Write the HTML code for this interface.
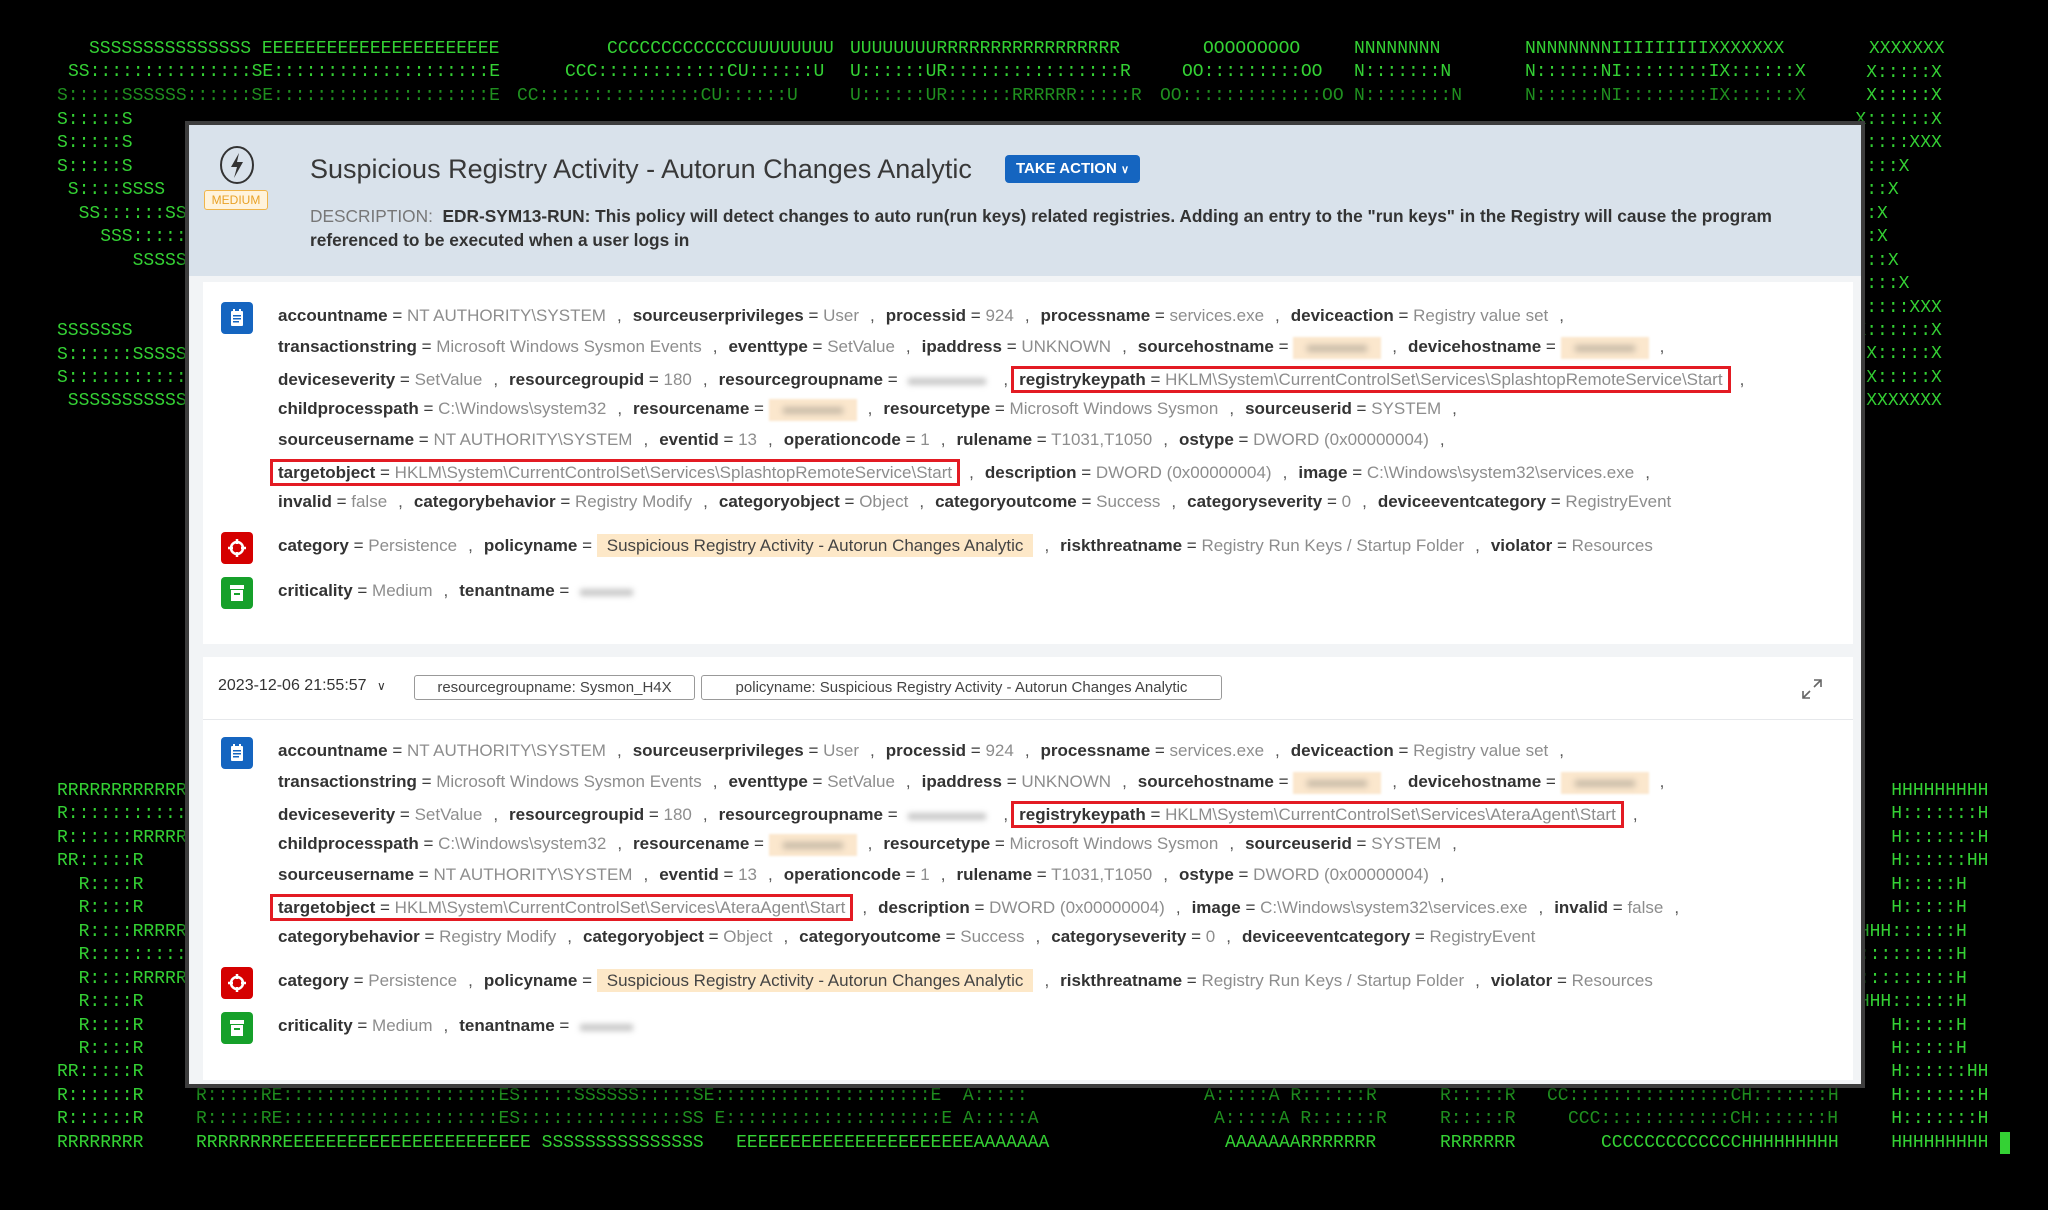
<!DOCTYPE html>
<html><head><meta charset="utf-8">
<style>
html,body{margin:0;padding:0;background:#000;width:2048px;height:1210px;overflow:hidden;position:relative;font-family:"Liberation Sans",sans-serif}
.a{position:absolute;font:18px/23.45px "Liberation Mono",monospace;color:#34d134;white-space:pre;margin:0}
.d{color:#1f8f1f}
#panel{position:absolute;left:185px;top:121px;width:1672px;height:959px;border:4px solid #3d3d3d;background:#f2f4f6;box-shadow:0 0 6px #000}
#hdr{position:absolute;left:0;top:0;width:1672px;height:151px;background:#d9e2eb}
.card{position:absolute;left:14px;width:1650px;background:#fff}
.row{position:absolute;left:75px;white-space:nowrap;font-size:17px;line-height:24px;height:24px;color:#3a3a3a}
k{color:#333;font-weight:bold}
v{color:#8d8d8d}
c{color:#555;margin:0 11px}
.bx{display:inline-block;border:3px solid #e31b23;padding:0 5px;line-height:21px;margin:0 -2px 0 -8px}
.bl{display:inline-block;width:88px;height:22px;vertical-align:middle;background:#fbe7cd;filter:blur(1px);position:relative}
.bl:after{content:"";position:absolute;left:14px;right:14px;top:8px;height:7px;background:#c9bba8;filter:blur(3px)}
.bg{display:inline-block;width:90px;height:22px;vertical-align:middle;position:relative}
.bg:after{content:"";position:absolute;left:6px;right:6px;top:8px;height:7px;background:#c8c8c8;filter:blur(3px)}
.pn{background:#fde8c8;padding:2px 10px;color:#444}
.ic{position:absolute;left:18px;width:32px;height:32px;border-radius:4px}
</style></head><body>

<!-- top ascii -->
<div class="a" style="left:89px;top:38px">SSSSSSSSSSSSSSS EEEEEEEEEEEEEEEEEEEEEE</div>
<div class="a" style="left:607px;top:38px">CCCCCCCCCCCCCUUUUUUUU</div>
<div class="a" style="left:850px;top:38px">UUUUUUUURRRRRRRRRRRRRRRRR</div>
<div class="a" style="left:1203px;top:38px">OOOOOOOOO</div>
<div class="a" style="left:1354px;top:38px">NNNNNNNN</div>
<div class="a" style="left:1525px;top:38px">NNNNNNNNIIIIIIIIIXXXXXXX</div>
<div class="a" style="left:1869px;top:38px">XXXXXXX</div>

<div class="a" style="left:68px;top:61px">SS:::::::::::::::SE::::::::::::::::::::E</div>
<div class="a" style="left:565px;top:61px">CCC::::::::::::CU::::::U</div>
<div class="a" style="left:850px;top:61px">U::::::UR::::::::::::::::R</div>
<div class="a" style="left:1182px;top:61px">OO:::::::::OO</div>
<div class="a" style="left:1354px;top:61px">N:::::::N</div>
<div class="a" style="left:1525px;top:61px">N::::::NI::::::::IX::::::X</div>

<div class="a d" style="left:57px;top:85px">S:::::SSSSSS::::::SE::::::::::::::::::::E</div>
<div class="a d" style="left:517px;top:85px">CC:::::::::::::::CU::::::U</div>
<div class="a d" style="left:850px;top:85px">U::::::UR::::::RRRRRR:::::R</div>
<div class="a d" style="left:1160px;top:85px">OO:::::::::::::OO</div>
<div class="a d" style="left:1354px;top:85px">N::::::::N</div>
<div class="a d" style="left:1525px;top:85px">N::::::NI::::::::IX::::::X</div>

<div class="a" style="left:57px;top:109px">S:::::S
S:::::S
S:::::S
 S::::SSSS
  SS::::::SSSSS
    SSS::::::::SS
       SSSSSS::::S
            S:::::S
            S:::::S
SSSSSSS     S:::::S
S::::::SSSSSS:::::S
S:::::::::::::::SS
 SSSSSSSSSSSSSSS</div>
<div class="a" style="left:1715px;top:62px">              X:::::X
              X:::::X
             X::::::X
XXX:::::X   X:::::XXX
   X:::::X X:::::X
    X:::::X:::::X
     X:::::::::X
     X:::::::::X
    X:::::X:::::X
   X:::::X X:::::X
XXX:::::X   X:::::XXX
X::::::X     X::::::X
X:::::X       X:::::X
X:::::X       X:::::X
XXXXXXX       XXXXXXX</div>

<!-- bottom ascii -->
<div class="a" style="left:57px;top:780px">RRRRRRRRRRRRRRRRR
R::::::::::::::::R
R::::::RRRRRR:::::R
RR:::::R     R:::::R
  R::::R     R:::::R
  R::::R     R:::::R
  R::::RRRRRR:::::R
  R:::::::::::::RR
  R::::RRRRRR:::::R
  R::::R     R:::::R
  R::::R     R:::::R
  R::::R     R:::::R
RR:::::R     R:::::R
R::::::R
R::::::R
RRRRRRRR</div>
<div class="a" style="left:1740px;top:780px">HHHHHHHHH     HHHHHHHHH
H:::::::H     H:::::::H
H:::::::H     H:::::::H
HH::::::H     H::::::HH
  H:::::H     H:::::H
  H:::::H     H:::::H
  H::::::HHHHH::::::H
  H:::::::::::::::::H
  H:::::::::::::::::H
  H::::::HHHHH::::::H
  H:::::H     H:::::H
  H:::::H     H:::::H
HH::::::H     H::::::HH
              H:::::::H
              H:::::::H
              HHHHHHHHH</div>
<div class="a d" style="left:196px;top:1085px">R:::::RE::::::::::::::::::::ES:::::SSSSSS:::::SE::::::::::::::::::::E  A:::::</div>
<div class="a d" style="left:1204px;top:1085px">A:::::A R::::::R</div>
<div class="a d" style="left:1440px;top:1085px">R:::::R</div>
<div class="a d" style="left:1547px;top:1085px">CC:::::::::::::::CH:::::::H</div>
<div class="a d" style="left:196px;top:1108px">R:::::RE::::::::::::::::::::ES:::::::::::::::SS E::::::::::::::::::::E A:::::A</div>
<div class="a d" style="left:1214px;top:1108px">A:::::A R::::::R</div>
<div class="a d" style="left:1440px;top:1108px">R:::::R</div>
<div class="a d" style="left:1568px;top:1108px">CCC::::::::::::CH:::::::H</div>
<div class="a" style="left:196px;top:1132px">RRRRRRRREEEEEEEEEEEEEEEEEEEEEEE SSSSSSSSSSSSSSS   EEEEEEEEEEEEEEEEEEEEEEAAAAAAA</div>
<div class="a" style="left:1225px;top:1132px">AAAAAAARRRRRRR</div>
<div class="a" style="left:1440px;top:1132px">RRRRRRR</div>
<div class="a" style="left:1601px;top:1132px">CCCCCCCCCCCCCHHHHHHHHH</div>
<div style="position:absolute;left:2000px;top:1132px;width:10px;height:22px;background:#34d134"></div>

<div id="panel">
 <div id="hdr">
  <svg style="position:absolute;left:29px;top:20px" width="38" height="40" viewBox="0 0 38 40"><ellipse cx="19" cy="20" rx="16" ry="18" fill="none" stroke="#333" stroke-width="2"/><path d="M21 8 L13 22 H19 L16 33 L25 17 H19 Z" fill="#333"/></svg>
  <div style="position:absolute;left:15px;top:65px;width:62px;height:18px;border:1.5px solid #f0b54a;background:#fff3dc;border-radius:3px;color:#e9a227;font-size:12px;line-height:18px;text-align:center">MEDIUM</div>
  <div style="position:absolute;left:121px;top:29px;font-size:27px;color:#383838;white-space:nowrap">Suspicious Registry Activity - Autorun Changes Analytic</div>
  <div style="position:absolute;left:816px;top:30px;width:135px;height:28px;background:#1565c0;border-radius:4px;color:#fff;font-size:15px;font-weight:bold;line-height:28px;text-align:center">TAKE ACTION <span style="font-size:11px">&#8744;</span></div>
  <div style="position:absolute;left:121px;top:79px;width:1540px;font-size:17.3px;line-height:24px;color:#333;font-weight:bold;white-space:nowrap"><span style="color:#777;font-weight:normal">DESCRIPTION:</span>&nbsp; EDR-SYM13-RUN: This policy will detect changes to auto run(run keys) related registries. Adding an entry to the "run keys" in the Registry will cause the program<br>referenced to be executed when a user logs in</div>
 </div>

 <div class="card" style="top:157px;height:362px">
  <div class="ic" style="top:20px;background:#1565c0"><svg width="32" height="32"><rect x="10" y="9" width="12" height="15" rx="1" fill="#fff"/><rect x="12" y="13" width="8" height="1.5" fill="#1565c0"/><rect x="12" y="16" width="8" height="1.5" fill="#1565c0"/><rect x="12" y="19" width="6" height="1.5" fill="#1565c0"/><rect x="12" y="7" width="2" height="4" fill="#fff"/><rect x="18" y="7" width="2" height="4" fill="#fff"/></svg></div>
  <div class="row" style="top:22px"><k>accountname</k> = <v>NT AUTHORITY\SYSTEM</v><c>,</c><k>sourceuserprivileges</k> = <v>User</v><c>,</c><k>processid</k> = <v>924</v><c>,</c><k>processname</k> = <v>services.exe</v><c>,</c><k>deviceaction</k> = <v>Registry value set</v><c>,</c></div>
  <div class="row" style="top:53px"><k>transactionstring</k> = <v>Microsoft Windows Sysmon Events</v><c>,</c><k>eventtype</k> = <v>SetValue</v><c>,</c><k>ipaddress</k> = <v>UNKNOWN</v><c>,</c><k>sourcehostname</k> = <span class="bl"></span><c>,</c><k>devicehostname</k> = <span class="bl"></span><c>,</c></div>
  <div class="row" style="top:84px"><k>deviceseverity</k> = <v>SetValue</v><c>,</c><k>resourcegroupid</k> = <v>180</v><c>,</c><k>resourcegroupname</k> = <span class="bg"></span><c>,</c><span class="bx"><k>registrykeypath</k> = <v>HKLM\System\CurrentControlSet\Services\SplashtopRemoteService\Start</v></span><c>,</c></div>
  <div class="row" style="top:115px"><k>childprocesspath</k> = <v>C:\Windows\system32</v><c>,</c><k>resourcename</k> = <span class="bl"></span><c>,</c><k>resourcetype</k> = <v>Microsoft Windows Sysmon</v><c>,</c><k>sourceuserid</k> = <v>SYSTEM</v><c>,</c></div>
  <div class="row" style="top:146px"><k>sourceusername</k> = <v>NT AUTHORITY\SYSTEM</v><c>,</c><k>eventid</k> = <v>13</v><c>,</c><k>operationcode</k> = <v>1</v><c>,</c><k>rulename</k> = <v>T1031,T1050</v><c>,</c><k>ostype</k> = <v>DWORD (0x00000004)</v><c>,</c></div>
  <div class="row" style="top:177px"><span class="bx"><k>targetobject</k> = <v>HKLM\System\CurrentControlSet\Services\SplashtopRemoteService\Start</v></span><c>,</c><k>description</k> = <v>DWORD (0x00000004)</v><c>,</c><k>image</k> = <v>C:\Windows\system32\services.exe</v><c>,</c></div>
  <div class="row" style="top:208px"><k>invalid</k> = <v>false</v><c>,</c><k>categorybehavior</k> = <v>Registry Modify</v><c>,</c><k>categoryobject</k> = <v>Object</v><c>,</c><k>categoryoutcome</k> = <v>Success</v><c>,</c><k>categoryseverity</k> = <v>0</v><c>,</c><k>deviceeventcategory</k> = <v>RegistryEvent</v></div>
  <div class="ic" style="top:250px;background:#d50000"><svg width="32" height="32"><circle cx="16" cy="16" r="6" fill="none" stroke="#fff" stroke-width="2.5"/><path d="M16 7v5M16 20v5M7 16h5M20 16h5" stroke="#fff" stroke-width="2.5"/></svg></div>
  <div class="row" style="top:252px"><k>category</k> = <v>Persistence</v><c>,</c><k>policyname</k> = <span class="pn">Suspicious Registry Activity - Autorun Changes Analytic</span><c>,</c><k>riskthreatname</k> = <v>Registry Run Keys / Startup Folder</v><c>,</c><k>violator</k> = <v>Resources</v></div>
  <div class="ic" style="top:295px;background:#16a02a"><svg width="32" height="32"><rect x="9" y="8" width="14" height="4" fill="#fff"/><rect x="10" y="13" width="12" height="11" fill="#fff"/><rect x="13" y="16" width="6" height="2" fill="#16a02a"/></svg></div>
  <div class="row" style="top:297px"><k>criticality</k> = <v>Medium</v><c>,</c><k>tenantname</k> = <span class="bg" style="width:65px"></span></div>
 </div>

 <div class="card" style="top:532px;height:423px">
  <div style="position:absolute;left:0;top:62px;width:1650px;height:1px;background:#e6e8eb"></div>
  <div style="position:absolute;left:15px;top:20px;font-size:16px;color:#333;white-space:nowrap">2023-12-06 21:55:57 <span style="font-size:12px;margin-left:6px">&#8744;</span></div>
  <div style="position:absolute;left:211px;top:18px;width:279px;height:23px;border:1px solid #999;border-radius:3px;font-size:15px;line-height:23px;text-align:center;color:#444;white-space:nowrap">resourcegroupname: Sysmon_H4X</div>
  <div style="position:absolute;left:498px;top:18px;width:519px;height:23px;border:1px solid #999;border-radius:3px;font-size:15px;line-height:23px;text-align:center;color:#444;white-space:nowrap">policyname: Suspicious Registry Activity - Autorun Changes Analytic</div>
  <svg style="position:absolute;left:1597px;top:20px" width="24" height="24"><path d="M14 3h7v7M21 3l-7 7M10 21H3v-7M3 21l7-7" stroke="#666" stroke-width="1.6" fill="none"/></svg>
  <div class="ic" style="top:80px;background:#1565c0"><svg width="32" height="32"><rect x="10" y="9" width="12" height="15" rx="1" fill="#fff"/><rect x="12" y="13" width="8" height="1.5" fill="#1565c0"/><rect x="12" y="16" width="8" height="1.5" fill="#1565c0"/><rect x="12" y="19" width="6" height="1.5" fill="#1565c0"/><rect x="12" y="7" width="2" height="4" fill="#fff"/><rect x="18" y="7" width="2" height="4" fill="#fff"/></svg></div>
  <div class="row" style="top:82px"><k>accountname</k> = <v>NT AUTHORITY\SYSTEM</v><c>,</c><k>sourceuserprivileges</k> = <v>User</v><c>,</c><k>processid</k> = <v>924</v><c>,</c><k>processname</k> = <v>services.exe</v><c>,</c><k>deviceaction</k> = <v>Registry value set</v><c>,</c></div>
  <div class="row" style="top:113px"><k>transactionstring</k> = <v>Microsoft Windows Sysmon Events</v><c>,</c><k>eventtype</k> = <v>SetValue</v><c>,</c><k>ipaddress</k> = <v>UNKNOWN</v><c>,</c><k>sourcehostname</k> = <span class="bl"></span><c>,</c><k>devicehostname</k> = <span class="bl"></span><c>,</c></div>
  <div class="row" style="top:144px"><k>deviceseverity</k> = <v>SetValue</v><c>,</c><k>resourcegroupid</k> = <v>180</v><c>,</c><k>resourcegroupname</k> = <span class="bg"></span><c>,</c><span class="bx"><k>registrykeypath</k> = <v>HKLM\System\CurrentControlSet\Services\AteraAgent\Start</v></span><c>,</c></div>
  <div class="row" style="top:175px"><k>childprocesspath</k> = <v>C:\Windows\system32</v><c>,</c><k>resourcename</k> = <span class="bl"></span><c>,</c><k>resourcetype</k> = <v>Microsoft Windows Sysmon</v><c>,</c><k>sourceuserid</k> = <v>SYSTEM</v><c>,</c></div>
  <div class="row" style="top:206px"><k>sourceusername</k> = <v>NT AUTHORITY\SYSTEM</v><c>,</c><k>eventid</k> = <v>13</v><c>,</c><k>operationcode</k> = <v>1</v><c>,</c><k>rulename</k> = <v>T1031,T1050</v><c>,</c><k>ostype</k> = <v>DWORD (0x00000004)</v><c>,</c></div>
  <div class="row" style="top:237px"><span class="bx"><k>targetobject</k> = <v>HKLM\System\CurrentControlSet\Services\AteraAgent\Start</v></span><c>,</c><k>description</k> = <v>DWORD (0x00000004)</v><c>,</c><k>image</k> = <v>C:\Windows\system32\services.exe</v><c>,</c><k>invalid</k> = <v>false</v><c>,</c></div>
  <div class="row" style="top:268px"><k>categorybehavior</k> = <v>Registry Modify</v><c>,</c><k>categoryobject</k> = <v>Object</v><c>,</c><k>categoryoutcome</k> = <v>Success</v><c>,</c><k>categoryseverity</k> = <v>0</v><c>,</c><k>deviceeventcategory</k> = <v>RegistryEvent</v></div>
  <div class="ic" style="top:310px;background:#d50000"><svg width="32" height="32"><circle cx="16" cy="16" r="6" fill="none" stroke="#fff" stroke-width="2.5"/><path d="M16 7v5M16 20v5M7 16h5M20 16h5" stroke="#fff" stroke-width="2.5"/></svg></div>
  <div class="row" style="top:312px"><k>category</k> = <v>Persistence</v><c>,</c><k>policyname</k> = <span class="pn">Suspicious Registry Activity - Autorun Changes Analytic</span><c>,</c><k>riskthreatname</k> = <v>Registry Run Keys / Startup Folder</v><c>,</c><k>violator</k> = <v>Resources</v></div>
  <div class="ic" style="top:355px;background:#16a02a"><svg width="32" height="32"><rect x="9" y="8" width="14" height="4" fill="#fff"/><rect x="10" y="13" width="12" height="11" fill="#fff"/><rect x="13" y="16" width="6" height="2" fill="#16a02a"/></svg></div>
  <div class="row" style="top:357px"><k>criticality</k> = <v>Medium</v><c>,</c><k>tenantname</k> = <span class="bg" style="width:65px"></span></div>
 </div>
</div>
</body></html>
